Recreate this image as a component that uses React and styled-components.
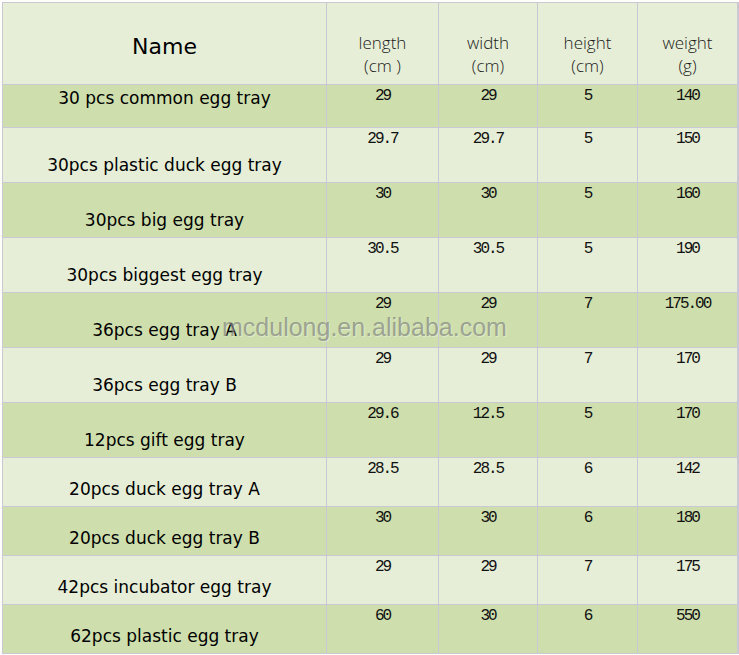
import React from "react";
import styled, { createGlobalStyle } from "styled-components";

const GlobalStyle = createGlobalStyle`
  html, body { margin: 0; padding: 0; background: #ffffff; }
  body { font-family: "DejaVu Sans", Verdana, sans-serif; }
`;

const COLS = "323px 111px 98px 99px 99px";

const rows = [
  { name: "30 pcs common egg tray", l: "29", w: "29", h: "5", g: "140", top: true },
  { name: "30pcs plastic duck egg tray", l: "29.7", w: "29.7", h: "5", g: "150" },
  { name: "30pcs big egg tray", l: "30", w: "30", h: "5", g: "160" },
  { name: "30pcs biggest egg tray", l: "30.5", w: "30.5", h: "5", g: "190" },
  { name: "36pcs egg tray A", l: "29", w: "29", h: "7", g: "175.00" },
  { name: "36pcs egg tray B", l: "29", w: "29", h: "7", g: "170" },
  { name: "12pcs gift egg tray", l: "29.6", w: "12.5", h: "5", g: "170" },
  { name: "20pcs duck egg tray A", l: "28.5", w: "28.5", h: "6", g: "142", short: true },
  { name: "20pcs duck egg tray B", l: "30", w: "30", h: "6", g: "180", short: true },
  { name: "42pcs incubator egg tray", l: "29", w: "29", h: "7", g: "175", short: true },
  { name: "62pcs plastic egg tray", l: "60", w: "30", h: "6", g: "550", short: true },
];

const Wrap = styled.div`
  position: relative;
  width: 737px;
  padding: 2px 0 0 2px;
`;

const Table = styled.div`
  display: flex;
  flex-direction: column;
  gap: 1px;
  padding: 1px;
  width: 735px;
  background: #c9c8d4;
`;

const Row = styled.div`
  display: grid;
  grid-template-columns: ${COLS};
  gap: 1px;
  height: ${(p) => p.$h}px;
`;

const Cell = styled.div`
  background: ${(p) => (p.$dark ? "#cedfad" : "#e6eed7")};
  display: flex;
  flex-direction: column;
  align-items: center;
  overflow: hidden;
`;

const HeadName = styled(Cell)`
  justify-content: center;
  padding-top: 5px;
  font-family: "DejaVu Sans", Verdana, sans-serif;
  font-size: 22px;
  color: #000;
`;

const HeadUnit = styled(Cell)`
  justify-content: flex-start;
  padding-top: 28px;
  font-family: "Open Sans", "Noto Sans", sans-serif;
  font-weight: 300;
  font-size: 17px;
  line-height: 23px;
  color: #1a1a1a;
  text-align: center;
`;

const NameCell = styled(Cell)`
  justify-content: ${(p) => (p.$top ? "flex-start" : "flex-end")};
  padding: ${(p) => (p.$top ? "3px 0 0" : "0 0 7px")};
  font-family: "DejaVu Sans", Verdana, sans-serif;
  font-size: 17px;
  line-height: 20px;
  color: #000;
  white-space: nowrap;
`;

const NumCell = styled(Cell)`
  justify-content: flex-start;
  padding-top: 3px;
  font-family: "Liberation Mono", "DejaVu Sans Mono", monospace;
  font-size: 16px;
  line-height: 17px;
  letter-spacing: -2px;
  color: #111;
`;

const Watermark = styled.div`
  position: absolute;
  left: 222px;
  top: 313px;
  font-family: "Liberation Sans", Arial, sans-serif;
  font-size: 25px;
  line-height: 28px;
  color: rgba(105, 105, 105, 0.55);
  text-shadow: 1px 1px 0 rgba(255, 255, 255, 0.35);
  pointer-events: none;
  white-space: nowrap;
`;

export default function App() {
  return (
    <>
      <GlobalStyle />
      <Wrap>
        <Table>
          <Row $h={81}>
            <HeadName>Name</HeadName>
            <HeadUnit>length<br />(cm )</HeadUnit>
            <HeadUnit>width<br />(cm)</HeadUnit>
            <HeadUnit>height<br />(cm)</HeadUnit>
            <HeadUnit>weight<br />(g)</HeadUnit>
          </Row>
          {rows.map((r, i) => {
            const dark = i % 2 === 0;
            const h = r.top ? 42 : r.short ? 48 : 54;
            return (
              <Row key={r.name} $h={h}>
                <NameCell $dark={dark} $top={r.top}>{r.name}</NameCell>
                <NumCell $dark={dark}>{r.l}</NumCell>
                <NumCell $dark={dark}>{r.w}</NumCell>
                <NumCell $dark={dark}>{r.h}</NumCell>
                <NumCell $dark={dark}>{r.g}</NumCell>
              </Row>
            );
          })}
        </Table>
        <Watermark>mcdulong.en.alibaba.com</Watermark>
      </Wrap>
    </>
  );
}
